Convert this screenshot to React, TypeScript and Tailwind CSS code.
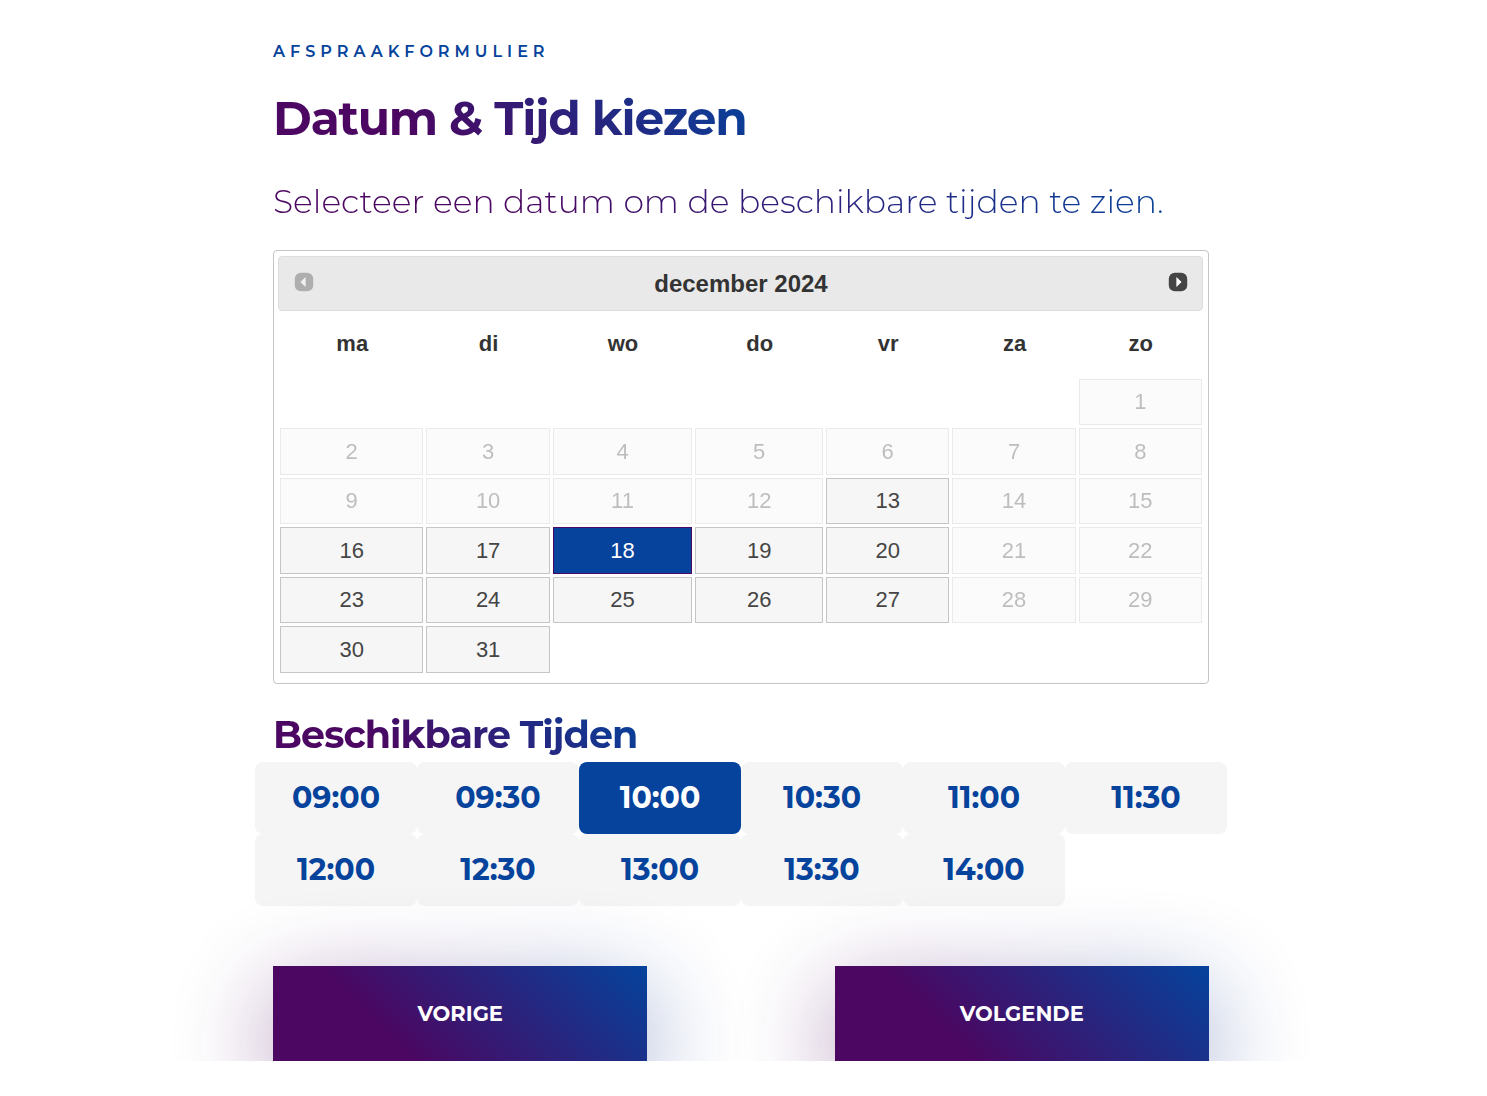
import React, { useState } from "react";
import clsx from "clsx";

const WEEKDAYS = ["ma", "di", "wo", "do", "vr", "za", "zo"];

// 0 = lege cel
const WEEKS = [
    [0, 0, 0, 0, 0, 0, 1],
    [2, 3, 4, 5, 6, 7, 8],
    [9, 10, 11, 12, 13, 14, 15],
    [16, 17, 18, 19, 20, 21, 22],
    [23, 24, 25, 26, 27, 28, 29],
    [30, 31, 0, 0, 0, 0, 0],
];

const AVAILABLE_DAYS = [13, 16, 17, 18, 19, 20, 23, 24, 25, 26, 27, 30, 31];

const TIMES = [
    "09:00", "09:30", "10:00", "10:30", "11:00", "11:30",
    "12:00", "12:30", "13:00", "13:30", "14:00",
];

const GRADIENT = "bg-linear-45/srgb from-[#4b0761] from-30% to-[#05439c]";

type ArrowProps = {
    direction: "prev" | "next";
    disabled?: boolean;
};

function MonthArrow({ direction, disabled }: ArrowProps) {
    return (
        <button
            type="button"
            disabled={disabled}
            aria-label={direction === "prev" ? "Vorige maand" : "Volgende maand"}
            className="mb-1 size-5 cursor-pointer disabled:cursor-default disabled:opacity-35"
        >
            <svg viewBox="0 0 20 20" className="size-5">
                <rect x="0.8" y="0.8" width="18.4" height="18.4" rx="6" fill="#444" />
                <path d={direction === "prev" ? "M11.6 5v10L6.4 10z" : "M8.4 5v10l5.2-5z"} fill="#fff" />
            </svg>
        </button>
    );
}

type CalendarProps = {
    selected: number;
    onSelect: (day: number) => void;
};

function Calendar({ selected, onSelect }: CalendarProps) {
    return (
        <div className="rounded border border-[#c5c5c5] bg-white px-1 pt-[5px] pb-[7px] font-['Liberation_Sans',Arial,sans-serif] text-[#333]">
            <div className="mr-px flex h-[55px] items-center justify-between rounded border border-[#ddd] bg-[#e9e9e9] pr-[14px] pl-[15px]">
                <MonthArrow direction="prev" disabled />
                <div className="text-2xl font-bold">december 2024</div>
                <MonthArrow direction="next" />
            </div>
            <table className="ml-[2px] w-[calc(100%-1px)] border-collapse text-[22px]">
                <thead>
                    <tr className="h-[68px]">
                        {WEEKDAYS.map((day) => (
                            <th key={day} scope="col" className="pt-0 pr-[8px] pb-[3px] pl-[6px] font-bold">
                                {day}
                            </th>
                        ))}
                    </tr>
                </thead>
                <tbody>
                    {WEEKS.map((week, i) => (
                        <tr key={i} className="h-[49px] even:h-[50px]">
                            {week.map((day, j) => (
                                <td key={j} className="h-[inherit] p-0 pr-[3px] pb-[3px]">
                                    {day > 0 && (
                                        <button
                                            type="button"
                                            disabled={!AVAILABLE_DAYS.includes(day)}
                                            aria-pressed={day === selected}
                                            onClick={() => onSelect(day)}
                                            className={clsx(
                                                "block h-full w-full border px-[5px] pb-px text-center disabled:opacity-35",
                                                day === selected
                                                    ? "border-[#4b0761] bg-[#05439c] text-white"
                                                    : "border-[#c5c5c5] bg-[#f6f6f6] text-[#454545]"
                                            )}
                                        >
                                            {day}
                                        </button>
                                    )}
                                </td>
                            ))}
                        </tr>
                    ))}
                </tbody>
            </table>
        </div>
    );
}

function GradientButton({ type, children }: { type: "button" | "submit"; children: React.ReactNode }) {
    return (
        <div className="relative w-2/5">
            {/* gekleurde gloed achter de knop */}
            <div className={`pointer-events-none absolute inset-x-0 top-7 h-full opacity-45 blur-[50px] ${GRADIENT}`} />
            <button
                type={type}
                className={`relative h-[95px] w-full cursor-pointer text-[21px] font-bold text-white ${GRADIENT}`}
            >
                {children}
            </button>
        </div>
    );
}

export default function App() {
    const [day, setDay] = useState(18);
    const [time, setTime] = useState("10:00");

    return (
        <main className="overflow-hidden bg-white pr-[5px] font-[Montserrat,Inter,sans-serif]">
            <form className="mx-auto max-w-[936px] pt-10" onSubmit={(e) => e.preventDefault()}>
                <p className="text-base leading-6 font-semibold tracking-[5px] text-[#05439c]">AFSPRAAKFORMULIER</p>
                <h1 className={`mt-6 w-fit bg-clip-text text-[47px] leading-[62px] font-bold tracking-tight text-transparent ${GRADIENT}`}>
                    Datum &amp; Tijd kiezen
                </h1>
                <p className={`mt-[26px] mb-6 w-fit bg-clip-text text-[33px] leading-[50px] font-light text-transparent ${GRADIENT}`}>
                    Selecteer een datum om de beschikbare tijden te zien.
                </p>

                <Calendar selected={day} onSelect={setDay} />

                <h2 className={`mt-6 w-fit bg-clip-text text-[38px] leading-[54px] font-bold tracking-tight text-transparent ${GRADIENT}`}>
                    Beschikbare Tijden
                </h2>
                <div className="-mx-[18px] grid grid-cols-6">
                    {TIMES.map((t) => (
                        <button
                            key={t}
                            type="button"
                            aria-pressed={t === time}
                            onClick={() => setTime(t)}
                            className={clsx(
                                "h-[72px] cursor-pointer rounded-lg text-3xl font-bold",
                                t === time ? "bg-[#05439c] text-white" : "bg-[#f5f5f5] text-[#05439c]"
                            )}
                        >
                            {t}
                        </button>
                    ))}
                </div>

                <div className="mt-[60px] flex justify-between">
                    <GradientButton type="button">VORIGE</GradientButton>
                    <GradientButton type="submit">VOLGENDE</GradientButton>
                </div>
            </form>
        </main>
    );
}
